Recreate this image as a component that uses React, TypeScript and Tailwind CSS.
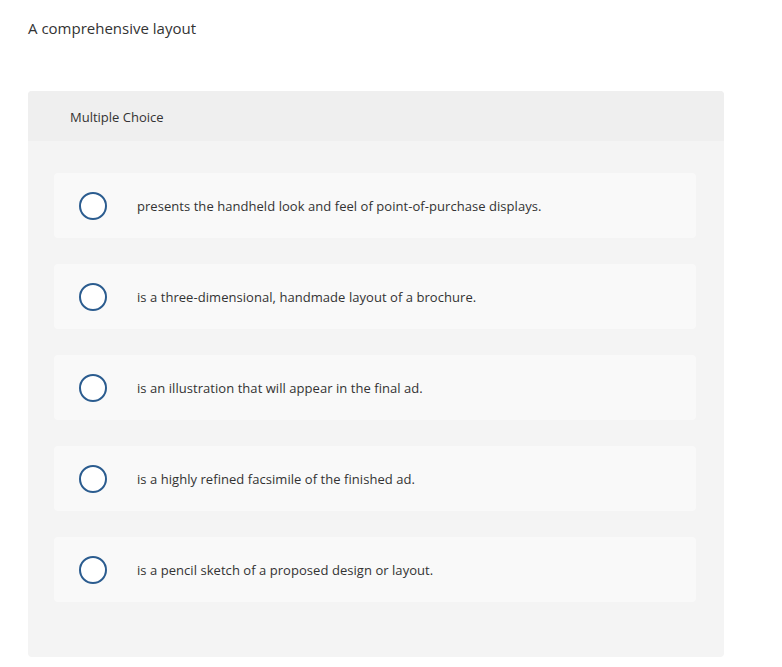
const options = [
  'presents the handheld look and feel of point-of-purchase displays.',
  'is a three-dimensional, handmade layout of a brochure.',
  'is an illustration that will appear in the final ad.',
  'is a highly refined facsimile of the finished ad.',
  'is a pencil sketch of a proposed design or layout.',
];

export default function App() {
  return (
    <div className="min-h-screen bg-white text-[#333] font-['Open_Sans',sans-serif]">
      <div className="px-7 pt-[18px]">
        <p className="text-[15px] leading-5">A comprehensive layout</p>
      </div>

      <div className="ml-7 mt-[53px] w-[696px] rounded-sm bg-[#f4f4f4] pb-[55px]">
        <div className="flex h-[50px] items-center rounded-t-sm bg-[#efefef] pl-[42px] pt-[3px] text-[13px]">
          Multiple Choice
        </div>

        <div className="flex flex-col gap-[26px] pl-[26px] pt-8">
          {options.map((text) => (
            <div
              key={text}
              className="flex h-[65px] w-[642px] items-center rounded-sm bg-[#f9f9f9]"
            >
              <span className="ml-[25px] h-7 w-7 shrink-0 rounded-full border-2 border-[#2b5c8f] bg-white" />
              <span className="ml-[30px] mt-[3px] text-[13px] tracking-[0.05px]">{text}</span>
            </div>
          ))}
        </div>
      </div>
    </div>
  );
}
